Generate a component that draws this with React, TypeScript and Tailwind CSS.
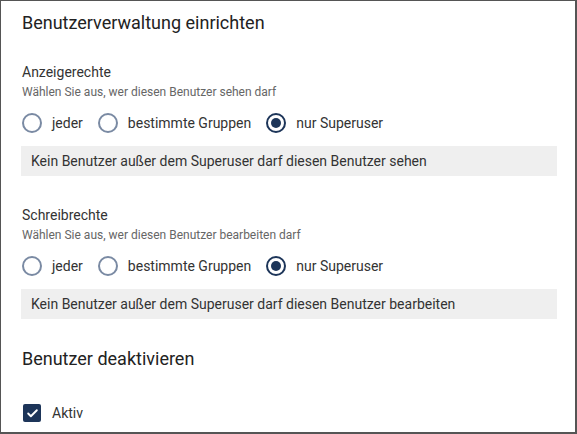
import { Check } from "lucide-react";

type Option = { label: string; checked?: boolean };

const options: Option[] = [
  { label: "jeder" },
  { label: "bestimmte Gruppen" },
  { label: "nur Superuser", checked: true },
];

function Radio({ checked }: { checked?: boolean }) {
  if (checked) {
    return (
      <span className="flex h-5 w-5 items-center justify-center rounded-full border-2 border-[#1d3559]">
        <span className="h-[10px] w-[10px] rounded-full bg-[#1d3559]" />
      </span>
    );
  }
  return <span className="h-5 w-5 rounded-full border-2 border-[#7a8aa3]" />;
}

function RightsSection({ title, hint, info }: { title: string; hint: string; info: string }) {
  return (
    <section>
      <div className="pl-px text-[14px] leading-5 text-[#333]">{title}</div>
      <div className="mt-[2px] pl-px text-[12px] leading-4 text-[#666]">{hint}</div>
      <div className="mt-[13px] flex items-center pl-px">
        {options.map((o) => (
          <label key={o.label} className="mr-[15px] flex items-center gap-[10px]">
            <Radio checked={o.checked} />
            <span className="text-[14px] leading-5 text-[#333]">{o.label}</span>
          </label>
        ))}
      </div>
      <div className="mt-[13px] flex h-[30px] items-center bg-[#efefef] pl-[10px] text-[14px] text-[#333]">
        {info}
      </div>
    </section>
  );
}

export default function App() {
  return (
    <div
      className="h-[434px] w-[577px] overflow-hidden border-t border-l border-r-2 border-b-2 border-[#555] bg-white pl-[20px] pr-[18px] pt-[10px]"
      style={{ fontFamily: "Roboto, 'Liberation Sans', sans-serif" }}
    >
      <h2 className="pl-px text-[18px] leading-6 text-[#222]">Benutzerverwaltung einrichten</h2>
      <div className="mt-[27px]">
        <RightsSection
          title="Anzeigerechte"
          hint="Wählen Sie aus, wer diesen Benutzer sehen darf"
          info="Kein Benutzer außer dem Superuser darf diesen Benutzer sehen"
        />
      </div>
      <div className="mt-[29px]">
        <RightsSection
          title="Schreibrechte"
          hint="Wählen Sie aus, wer diesen Benutzer bearbeiten darf"
          info="Kein Benutzer außer dem Superuser darf diesen Benutzer bearbeiten"
        />
      </div>
      <h2 className="mt-[28px] pl-px text-[18px] leading-6 text-[#222]">Benutzer deaktivieren</h2>
      <label className="mt-[32px] flex items-center gap-[11px] pl-[2px]">
        <span className="flex h-[18px] w-[18px] items-center justify-center rounded-[2px] bg-[#1d3559]">
          <Check className="h-[13px] w-[13px] text-white" strokeWidth={3.5} />
        </span>
        <span className="text-[14px] leading-5 text-[#333]">Aktiv</span>
      </label>
    </div>
  );
}
